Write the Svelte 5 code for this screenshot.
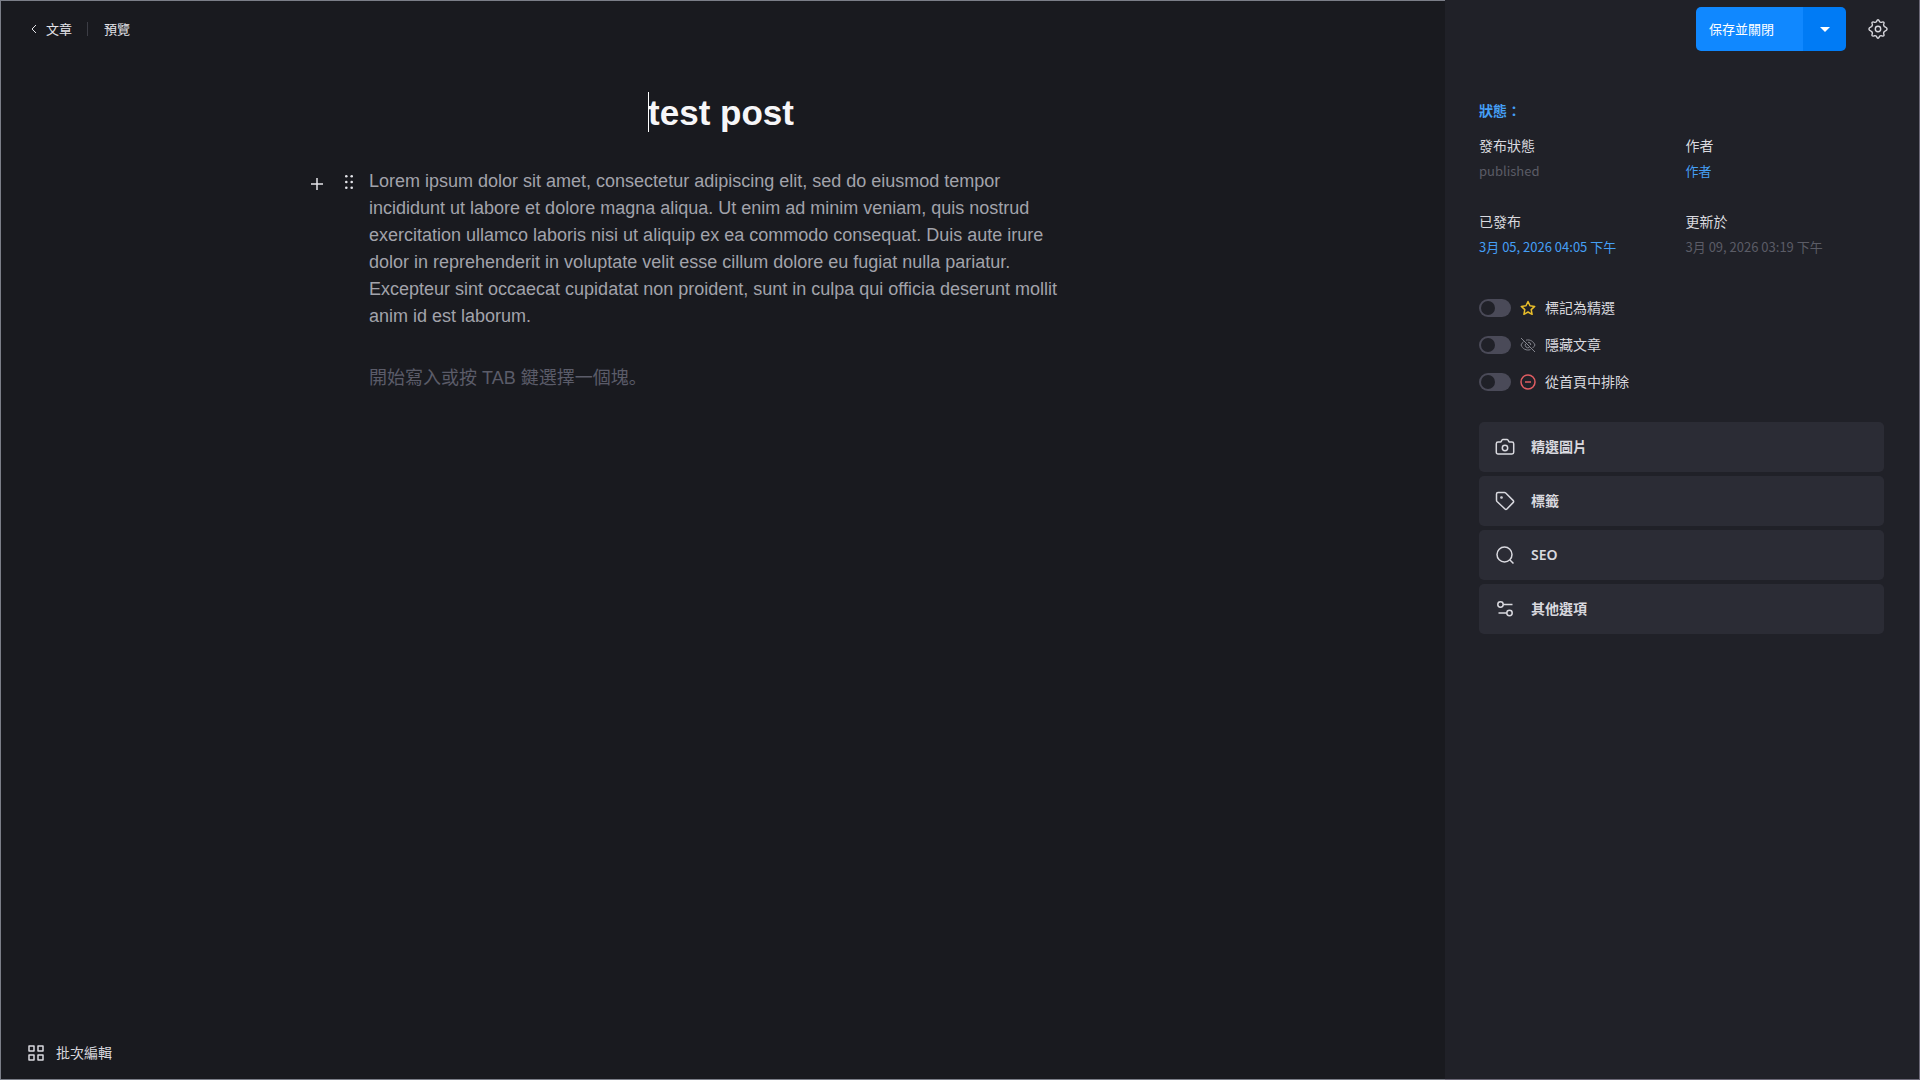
<script>
	let title = "test post"
	let saveMenuOpen = false
	let placeholder = "開始寫入或按 TAB 鍵選擇一個塊。"

	let content = "Lorem ipsum dolor sit amet, consectetur adipiscing elit, sed do eiusmod tempor incididunt ut labore et dolore magna aliqua. Ut enim ad minim veniam, quis nostrud exercitation ullamco laboris nisi ut aliquip ex ea commodo consequat. Duis aute irure dolor in reprehenderit in voluptate velit esse cillum dolore eu fugiat nulla pariatur. Excepteur sint occaecat cupidatat non proident, sunt in culpa qui officia deserunt mollit anim id est laborum."

	let details = [
		{ label: "發布狀態", value: "published" },
		{ label: "作者", value: "作者", link: true },
		{ label: "已發布", value: "3月 05, 2026 04:05 下午", link: true },
		{ label: "更新於", value: "3月 09, 2026 03:19 下午" }
	]

	let switches = [
		{ id: "featured", label: "標記為精選", icon: "star", checked: false },
		{ id: "hidden", label: "隱藏文章", icon: "hide", checked: false },
		{ id: "excluded", label: "從首頁中排除", icon: "exclude", checked: false }
	]

	let panels = [
		{ label: "精選圖片", icon: "camera" },
		{ label: "標籤", icon: "tag" },
		{ label: "SEO", icon: "search" },
		{ label: "其他選項", icon: "options" }
	]
</script>

<div class="post-editor">
	<main class="editor">
		<nav class="topbar">
			<a class="back" href="#posts">
				<svg width="6" height="10" viewBox="0 0 6 10"><path d="M5 1 1 5l4 4" /></svg>
				文章
			</a>
			<a class="preview" href="#preview">預覽</a>
		</nav>

		<div class="document">
			<div class="title">
				<div class="title-field">
					<span class="caret"></span>
					<input type="text" aria-label="Title" size="9" bind:value={title} />
				</div>
			</div>
			<div class="block">
				<div class="block-tools">
					<button type="button" class="add" aria-label="Add block">
						<svg width="12" height="12" viewBox="0 0 12 12"><path d="M6 0v12M0 6h12" /></svg>
					</button>
					<button type="button" class="drag" aria-label="Move block">
						<svg width="8" height="14" viewBox="0 0 8 14">
							{#each [1.3, 7, 12.7] as y}
								<circle cx="1.3" cy={y} r="1.3" />
								<circle cx="6.7" cy={y} r="1.3" />
							{/each}
						</svg>
					</button>
				</div>
				<p>{content}</p>
			</div>
			<p class="placeholder">{placeholder}</p>
		</div>

		<footer>
			<button type="button" class="bulk">
				<svg width="16" height="16" viewBox="0 0 16 16"><path d="M1 1h5v5H1zM10 1h5v5h-5zM1 10h5v5H1zM10 10h5v5h-5z" /></svg>
				批次編輯
			</button>
		</footer>
	</main>

	<aside class="sidebar">
		<div class="actions">
			<div class="save-group">
				<button type="button" class="save">保存並關閉</button>
				<button type="button" class="save-more" aria-label="More" on:click={() => (saveMenuOpen = !saveMenuOpen)}>
					<svg width="10" height="5" viewBox="0 0 10 5"><path d="M0 0h10L5 5z" /></svg>
				</button>
			</div>
			<button type="button" class="settings" aria-label="Settings">
				<svg width="20" height="20" viewBox="0 0 20 20">
					<path d="M8.3 2.900C8.900 2.600 8.700.8 10 .8s1.100 1.800 1.700 2.100l1.300.5c.7.2 1.900-1.100 2.800-.2s-.4 2.100-.2 2.800l.6 1.400c.3.600 2.900.6 2.900 2.600s-2.600 2-2.900 2.600l-.6 1.400c-.2.7 1.100 1.900.2 2.800s-2.100-.4-2.800-.2l-1.300.5c-.6.300-.4 2.100-1.700 2.100s-1.100-1.800-1.700-2.100L7 16.600c-.7-.2-1.900 1.100-2.800.2s.4-2.100.2-2.800l-.6-1.400C3.500 12 .9 12 .9 10s2.600-2 2.900-2.600L4.400 6c.2-.7-1.100-1.900-.2-2.800s2.100.4 2.800.2z" />
					<circle cx="10" cy="10" r="2.7" />
				</svg>
			</button>
		</div>

		<div class="sidebar-body">
			<h2>狀態：</h2>
			<dl>
				{#each details as item}
					<div>
						<dt>{item.label}</dt>
						<dd>
							{#if item.link}
								<a href="#edit">{item.value}</a>
							{:else}
								{item.value}
							{/if}
						</dd>
					</div>
				{/each}
			</dl>

			<div class="switches">
				{#each switches as item}
					<div class="switch">
						<input type="checkbox" id={item.id} bind:checked={item.checked} />
						<label for={item.id}>
							<svg class={item.icon} width="16" height="16" viewBox="0 0 16 16">
								{#if item.icon == "star"}
									<path d="m8 1.5 2 4.3 4.7.6-3.5 3.2.9 4.7L8 12l-4.1 2.3.9-4.7-3.5-3.2 4.7-.6z" />
								{:else if item.icon == "hide"}
									<path d="m1 1 14 14M6 3.2C10.500 2 13.500 4.800 15 8c-.6 1.200-1.400 2.200-2.400 3M10.500 12.600C6.200 14 2.600 11.800 1 8c.6-1.400 1.500-2.500 2.600-3.300M5.500 6.800a2.800 2.800 0 0 0 3.800 3.700M8 5.200A2.800 2.800 0 0 1 10.800 8" />
								{:else}
									<circle cx="8" cy="8" r="7" />
									<path d="M5 8h6" />
								{/if}
							</svg>
							{item.label}
						</label>
					</div>
				{/each}
			</div>

			<div class="panels">
				{#each panels as panel}
					<button type="button" class="panel">
						<svg width="20" height="20" viewBox="0 0 20 20">
							{#if panel.icon == "camera"}
								<path d="M3 5h2.500c1 0 1.100-2.500 2.300-2.500h4.400c1.200 0 1.300 2.500 2.300 2.500H17c1 0 1.700.7 1.700 1.700v8.600c0 1-.7 1.700-1.700 1.700H3c-1 0-1.700-.7-1.700-1.700V6.700C1.300 5.700 2 5 3 5z" />
								<circle cx="10" cy="11" r="2.700" />
							{:else if panel.icon == "tag"}
								<path d="M1.500 3c0-.9.6-1.500 1.500-1.500h6.500c.5 0 .9.200 1.200.5l7.600 7.600c.5.500.5 1.300 0 1.800l-6.400 6.600c-.5.500-1.400.5-1.900 0L2 10.500c-.3-.3-.5-.8-.5-1.200z" />
								<circle cx="6.500" cy="6.500" r=".6" />
							{:else if panel.icon == "search"}
								<circle cx="9.500" cy="9.500" r="7.500" />
								<path d="m15 15 3.500 3.500" />
							{:else}
								<circle cx="5.500" cy="5.500" r="2.700" />
								<circle cx="14.500" cy="14" r="2.700" />
								<path d="M8.200 5.500h9.300M3.500 14h8.300" />
							{/if}
						</svg>
						{panel.label}
					</button>
				{/each}
			</div>
		</div>
	</aside>
</div>

<style>
	:global(body) {
		background: #191a1f;
	}
	.post-editor {
		display: flex;
		min-height: 100vh;
		box-sizing: border-box;
		background: #191a1f;
		color: #d9d9df;
		font: 14px/20px "Noto Sans", "Noto Sans CJK TC", sans-serif;
	}
	button {
		display: flex;
		align-items: center;
		padding: 0;
		border: none;
		background: none;
		color: inherit;
		font: inherit;
		cursor: pointer;
	}
	a {
		color: #459ff5;
		text-decoration: none;
	}
	p, h2, dl, dd {
		margin: 0;
	}
	svg {
		flex: none;
		fill: none;
		stroke: currentColor;
		stroke-width: 1.5;
		stroke-linejoin: round;
	}

	.editor {
		flex: 1;
		display: flex;
		flex-direction: column;
		border: 1px solid #7b7e88;
		border-right: none;
	}
	.topbar {
		display: flex;
		align-items: center;
		height: 56px;
		padding-left: 30px;
		font-size: 13px;
	}
	.topbar a {
		color: #e4e4e9;
	}
	.back {
		display: flex;
		align-items: center;
		gap: 9px;
	}
	.back svg {
		stroke-width: 1;
	}
	.preview {
		margin-left: 15px;
		border-left: 1px solid #3c3d45;
		padding-left: 16px;
		line-height: 14px;
	}

	.document {
		width: 708px;
		margin: 32px auto 0;
		color: #a2a3ab;
		font: 18px/27px "Liberation Sans", "Noto Sans CJK SC", sans-serif;
	}
	.title {
		display: flex;
		justify-content: center;
		height: 48px;
		margin-bottom: 31px;
		padding-right: 4px;
	}
	.title-field {
		position: relative;
	}
	.title input {
		field-sizing: content;
		padding: 0;
		border: none;
		outline: none;
		background: none;
		color: #f6f6f8;
		font: bold 35px/48px "Liberation Sans", sans-serif;
	}
	.caret {
		position: absolute;
		top: 3px;
		left: 0;
		width: 1px;
		height: 40px;
		background: #fff;
	}
	.block {
		position: relative;
	}
	/* sits in the gutter left of the block */
	.block-tools {
		position: absolute;
		top: 0;
		right: 100%;
		display: flex;
		gap: 22px;
		padding: 6px 16px 0 0;
		color: #e4e4e9;
	}
	.add {
		padding-top: 4px;
	}
	.drag svg {
		fill: currentColor;
		stroke: none;
	}
	.placeholder {
		margin-top: 35px;
		color: #5b5c69;
	}

	footer {
		margin-top: auto;
		padding: 0 27px 16px;
	}
	.bulk {
		gap: 12px;
	}

	.sidebar {
		width: 475px;
		box-sizing: border-box;
		background: #202128;
		border: solid #6b6877;
		border-width: 0 1px 1px 0;
	}
	.actions {
		display: flex;
		align-items: center;
		justify-content: flex-end;
		gap: 22px;
		padding: 7px 31px 0 0;
	}
	.save-group {
		display: flex;
		height: 44px;
		border-radius: 5px;
		overflow: hidden;
		color: #fff;
		font-size: 13px;
	}
	.save {
		width: 107px;
		padding-left: 13px;
		background: #1088ff;
	}
	.save-more {
		width: 43px;
		justify-content: center;
		background: #007bf5;
	}
	.save-more svg {
		fill: currentColor;
		stroke: none;
	}
	.settings svg {
		stroke-width: 1.4;
	}

	.sidebar-body {
		padding: 50px 35px 0 34px;
	}
	h2 {
		color: #459ff5;
		font-size: 14px;
		line-height: 20px;
	}
	dl {
		display: grid;
		grid-template-columns: 1fr 1fr;
		gap: 27px 8px;
		margin-top: 12px;
	}
	dt {
		line-height: 26px;
	}
	dd {
		color: #5b5c66;
		font: 13px/23px "Noto Sans CJK TC", sans-serif;
	}

	.switches {
		display: flex;
		flex-direction: column;
		gap: 17px;
		margin-top: 40px;
	}
	.switch, .switch label {
		display: flex;
		align-items: center;
		gap: 9px;
	}
	.switch input {
		appearance: none;
		display: flex;
		width: 32px;
		height: 18px;
		margin: 0;
		padding: 2px;
		box-sizing: border-box;
		border-radius: 9px;
		background: #4a4a58;
		cursor: pointer;
	}
	.switch input::before {
		content: "";
		width: 14px;
		height: 14px;
		border-radius: 50%;
		background: #202128;
	}
	.switch input:checked {
		justify-content: flex-end;
		background: #1088ff;
	}
	.star {
		color: #e8bd2a;
	}
	.hide {
		color: #85868f;
		stroke-width: 1;
	}
	.exclude {
		color: #e05d62;
	}

	.panels {
		display: flex;
		flex-direction: column;
		gap: 4px;
		margin-top: 30px;
	}
	.panel {
		gap: 16px;
		height: 50px;
		padding: 0 16px;
		border-radius: 5px;
		background: #2b2c35;
		font-weight: 600;
	}
</style>
